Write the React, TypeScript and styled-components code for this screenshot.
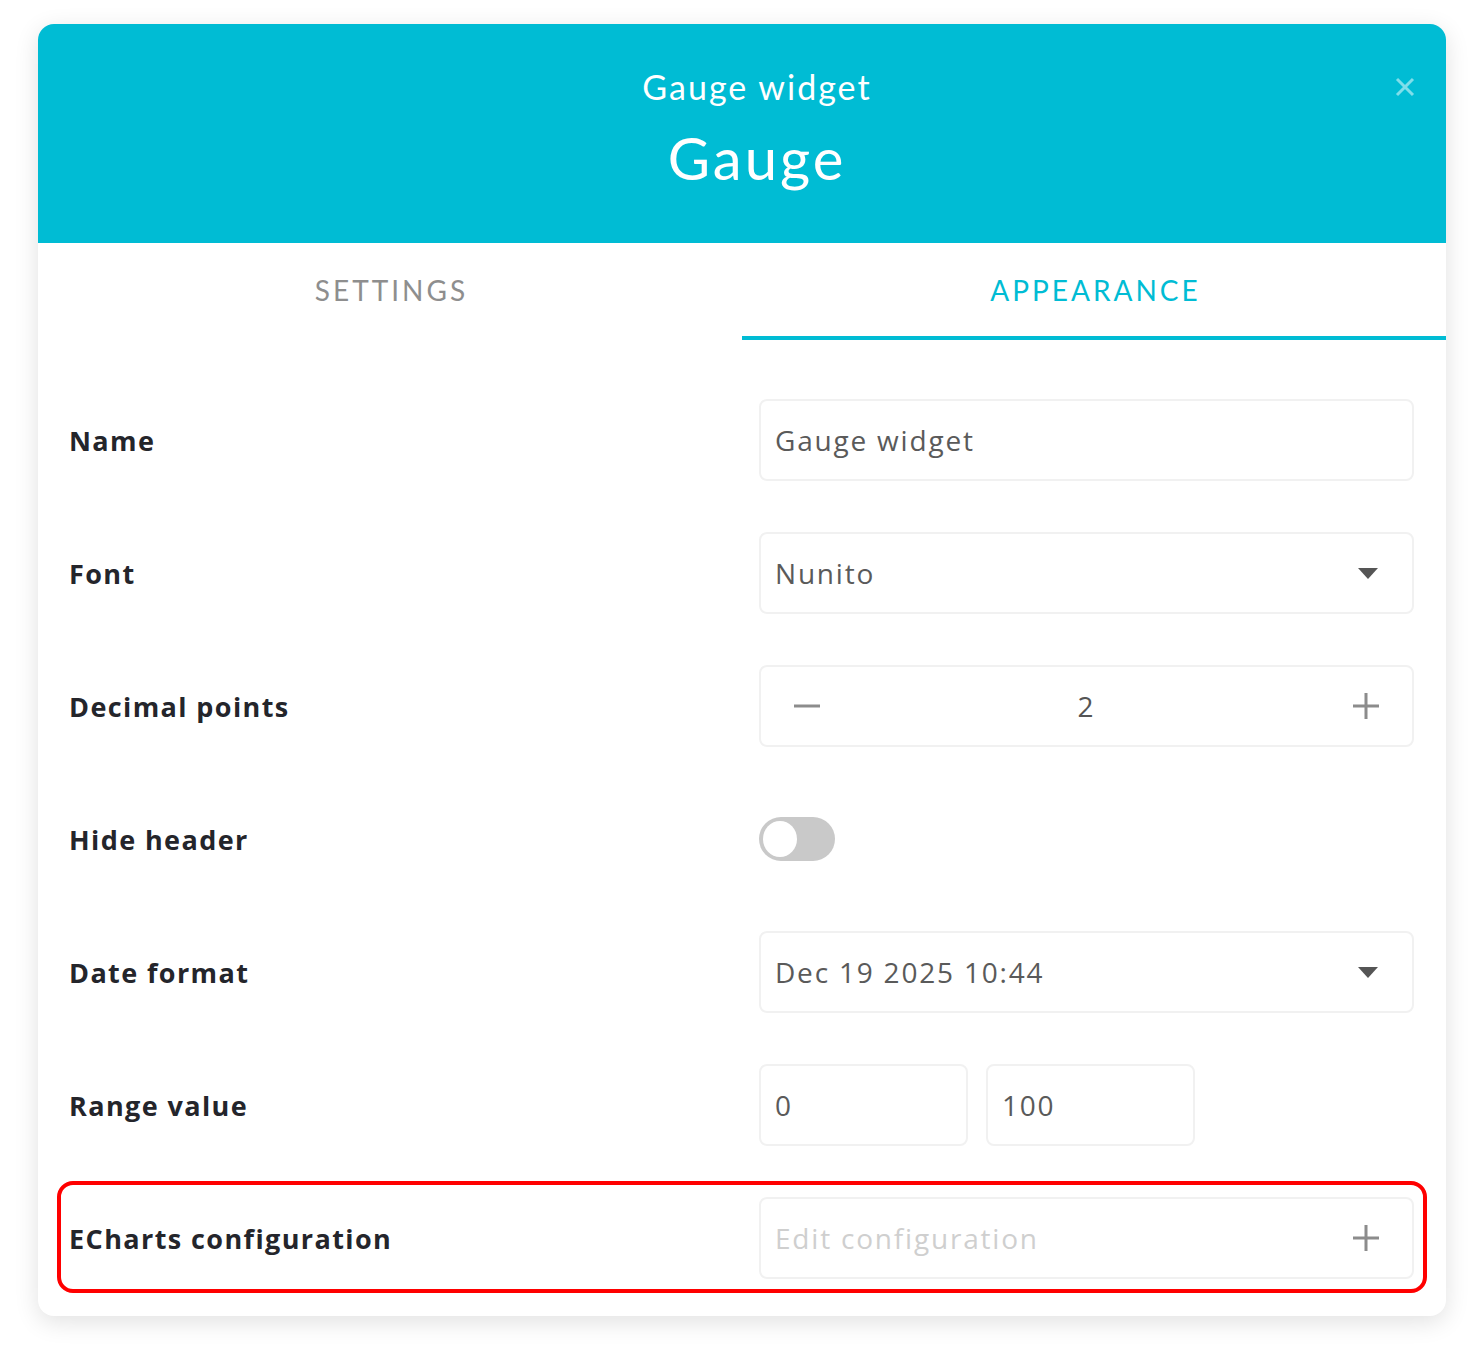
import * as React from 'react'
import styled, { createGlobalStyle } from 'styled-components'

const GlobalStyle = createGlobalStyle`
  html, body {
    margin: 0;
    padding: 0;
    background: #ffffff;
  }
  body {
    font-family: 'Nunito', 'Lato', 'Open Sans', sans-serif;
  }
`

const SPage = styled.div`
  padding: 24px 22px 38px 38px;
`

const SCard = styled.div`
  width: 1408px;
  background: #ffffff;
  border-radius: 16px;
  overflow: hidden;
  box-shadow: 0 6px 24px rgba(0, 0, 0, 0.12);
  padding-bottom: 37px;
`

const SHeader = styled.div`
  position: relative;
  height: 219px;
  background: #00bcd4;
  color: #ffffff;
  display: flex;
  flex-direction: column;
  align-items: center;
  padding: 43px 0 0 30px;
  box-sizing: border-box;
`

const SSubtitle = styled.div`
  font-family: 'Lato', sans-serif;
  font-size: 34px;
  line-height: 40px;
  letter-spacing: 2px;
`

const STitle = styled.div`
  font-family: 'Lato', sans-serif;
  font-size: 58px;
  line-height: 70px;
  margin-top: 16px;
  letter-spacing: 3px;
`

const SClose = styled.button`
  position: absolute;
  top: 49px;
  right: 30px;
  width: 22px;
  height: 30px;
  padding: 0;
  border: none;
  background: none;
  color: rgba(255, 255, 255, 0.5);
  cursor: pointer;
`

const STabs = styled.div`
  display: flex;
  height: 97px;
`

interface ITabProps {
  active?: boolean
}

const STab = styled.div<ITabProps>`
  flex: 1;
  display: flex;
  align-items: center;
  justify-content: center;
  font-family: 'Lato', sans-serif;
  font-size: 28px;
  letter-spacing: 3px;
  color: ${({ active }) => (active ? '#00bcd4' : '#8e8e8e')};
  border-bottom: 4px solid ${({ active }) => (active ? '#00bcd4' : 'transparent')};
  padding-left: 3px;
  box-sizing: border-box;
`

const SBody = styled.div`
  display: flex;
  flex-direction: column;
  gap: 51px;
  padding: 59px 32px 0 31px;
`

const SRow = styled.div`
  position: relative;
  display: grid;
  grid-template-columns: 690px 655px;
  align-items: center;
  min-height: 82px;
`

const SHighlight = styled.div`
  position: absolute;
  left: -12px;
  right: -13px;
  top: -16px;
  bottom: -14px;
  border: 4px solid #ff0000;
  border-radius: 16px;
  pointer-events: none;
`

const SLabel = styled.div`
  font-family: 'Open Sans', sans-serif;
  font-weight: 700;
  font-size: 27px;
  letter-spacing: 1.4px;
  color: #24252b;
`

const SField = styled.div`
  display: flex;
  align-items: center;
  height: 82px;
  box-sizing: border-box;
  border: 2px solid #f1f1f1;
  border-radius: 8px;
  padding: 0 14px;
  font-family: 'Open Sans', sans-serif;
  font-size: 28px;
  letter-spacing: 1.8px;
  color: #5a5a5a;
`

const SSelect = styled(SField)`
  justify-content: space-between;
  padding-right: 34px;
`

const SStepper = styled(SField)`
  justify-content: space-between;
  padding: 0 32px 0 32px;
`

const SStepValue = styled.span`
  color: #555555;
`

const SRange = styled.div`
  display: flex;
  gap: 18px;
`

const SRangeField = styled(SField)`
  width: 209px;
`

const SPlaceholder = styled(SField)`
  justify-content: space-between;
  color: #cfcfcf;
  padding-right: 32px;
`

const SToggle = styled.div`
  width: 76px;
  height: 44px;
  border-radius: 22px;
  background: #c9c9c9;
  display: flex;
  align-items: center;
  padding: 4px;
  box-sizing: border-box;
`

const SKnob = styled.div`
  width: 34px;
  height: 36px;
  border-radius: 50%;
  background: #ffffff;
`

function Caret() {
  return (
    <svg width="20" height="11" viewBox="0 0 20 11">
      <path d="M0 0 H20 L10 11 Z" fill="#555555" />
    </svg>
  )
}

function Plus() {
  return (
    <svg width="28" height="28" viewBox="0 0 28 28">
      <path d="M14 1 V27 M1 14 H27" stroke="#8c8c8c" strokeWidth="3" />
    </svg>
  )
}

function Minus() {
  return (
    <svg width="28" height="28" viewBox="0 0 28 28">
      <path d="M1 14 H27" stroke="#8c8c8c" strokeWidth="3" />
    </svg>
  )
}

export default function App() {
  return (
    <>
      <GlobalStyle />
      <SPage>
        <SCard>
          <SHeader>
            <SSubtitle>Gauge widget</SSubtitle>
            <STitle>Gauge</STitle>
            <SClose aria-label="close">
              <svg width="20" height="20" viewBox="0 0 20 20">
                <path d="M2 2 L18 18 M18 2 L2 18" stroke="currentColor" strokeWidth="3" />
              </svg>
            </SClose>
          </SHeader>
          <STabs>
            <STab>SETTINGS</STab>
            <STab active>APPEARANCE</STab>
          </STabs>
          <SBody>
            <SRow>
              <SLabel>Name</SLabel>
              <SField>Gauge widget</SField>
            </SRow>
            <SRow>
              <SLabel>Font</SLabel>
              <SSelect>
                <span>Nunito</span>
                <Caret />
              </SSelect>
            </SRow>
            <SRow>
              <SLabel>Decimal points</SLabel>
              <SStepper>
                <Minus />
                <SStepValue>2</SStepValue>
                <Plus />
              </SStepper>
            </SRow>
            <SRow>
              <SLabel>Hide header</SLabel>
              <SToggle>
                <SKnob />
              </SToggle>
            </SRow>
            <SRow>
              <SLabel>Date format</SLabel>
              <SSelect>
                <span>Dec 19 2025 10:44</span>
                <Caret />
              </SSelect>
            </SRow>
            <SRow>
              <SLabel>Range value</SLabel>
              <SRange>
                <SRangeField>0</SRangeField>
                <SRangeField>100</SRangeField>
              </SRange>
            </SRow>
            <SRow>
              <SHighlight />
              <SLabel>ECharts configuration</SLabel>
              <SPlaceholder>
                <span>Edit configuration</span>
                <Plus />
              </SPlaceholder>
            </SRow>
          </SBody>
        </SCard>
      </SPage>
    </>
  )
}
